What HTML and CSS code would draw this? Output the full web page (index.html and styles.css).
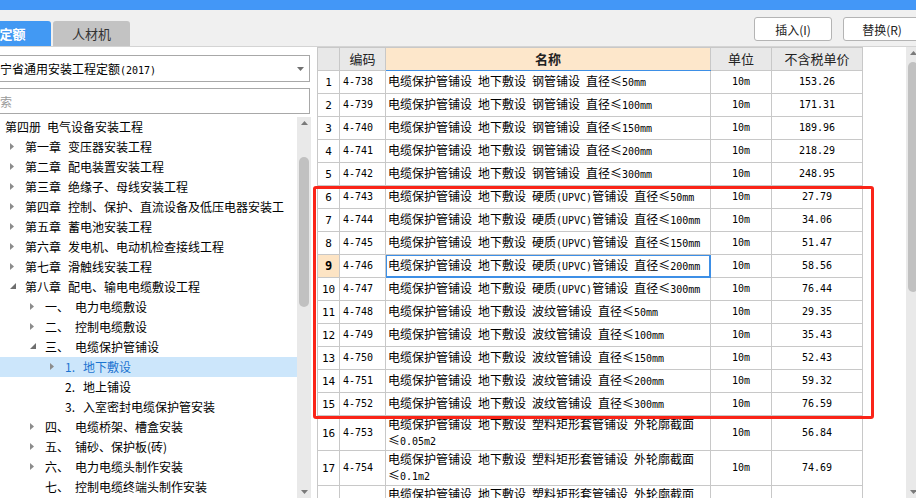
FILE: index.html
```html
<!DOCTYPE html>
<html lang="zh">
<head>
<meta charset="utf-8">
<link rel="stylesheet" href="styles.css">
</head>
<body>
<div class="topbar"></div>
<div class="toolbar">
  <div class="tab tab-active">定额</div>
  <div class="tab">人材机</div>
  <div class="btns">
    <button class="btn">插入(I)</button>
    <button class="btn">替换(R)</button>
  </div>
</div>
<div class="content">
  <div class="left">
    <div class="combo">
      <span>辽宁省通用安装工程定额<span class="m">(2017)</span></span>
      <svg class="caret" width="7" height="4" viewBox="0 0 7 4"><path d="M0 0H7L3.5 4Z" fill="#707070"/></svg>
    </div>
    <div class="search">搜索</div>
    <div class="tree">
      <div class="tree-list">
        <div class="row l0">第四册&ensp;电气设备安装工程</div>
        <div class="row l1"><span class="tw"><svg width="4" height="7" viewBox="0 0 4 7"><path d="M0 0L4 3.5L0 7Z" fill="#8c8c8c"/></svg></span><span>第一章</span><span class="nm1">变压器安装工程</span></div>
        <div class="row l1"><span class="tw"><svg width="4" height="7" viewBox="0 0 4 7"><path d="M0 0L4 3.5L0 7Z" fill="#8c8c8c"/></svg></span><span>第二章</span><span class="nm1">配电装置安装工程</span></div>
        <div class="row l1"><span class="tw"><svg width="4" height="7" viewBox="0 0 4 7"><path d="M0 0L4 3.5L0 7Z" fill="#8c8c8c"/></svg></span><span>第三章</span><span class="nm1">绝缘子、母线安装工程</span></div>
        <div class="row l1"><span class="tw"><svg width="4" height="7" viewBox="0 0 4 7"><path d="M0 0L4 3.5L0 7Z" fill="#8c8c8c"/></svg></span><span>第四章</span><span class="nm1">控制、保护、直流设备及低压电器安装工</span></div>
        <div class="row l1"><span class="tw"><svg width="4" height="7" viewBox="0 0 4 7"><path d="M0 0L4 3.5L0 7Z" fill="#8c8c8c"/></svg></span><span>第五章</span><span class="nm1">蓄电池安装工程</span></div>
        <div class="row l1"><span class="tw"><svg width="4" height="7" viewBox="0 0 4 7"><path d="M0 0L4 3.5L0 7Z" fill="#8c8c8c"/></svg></span><span>第六章</span><span class="nm1">发电机、电动机检查接线工程</span></div>
        <div class="row l1"><span class="tw"><svg width="4" height="7" viewBox="0 0 4 7"><path d="M0 0L4 3.5L0 7Z" fill="#8c8c8c"/></svg></span><span>第七章</span><span class="nm1">滑触线安装工程</span></div>
        <div class="row l1"><span class="tw"><svg width="6" height="6" viewBox="0 0 6 6"><path d="M6 0V6H0Z" fill="#6e6e6e"/></svg></span><span>第八章</span><span class="nm1">配电、输电电缆敷设工程</span></div>
        <div class="row l2"><span class="tw"><svg width="4" height="7" viewBox="0 0 4 7"><path d="M0 0L4 3.5L0 7Z" fill="#8c8c8c"/></svg></span><span class="lb2">一、</span><span>电力电缆敷设</span></div>
        <div class="row l2"><span class="tw"><svg width="4" height="7" viewBox="0 0 4 7"><path d="M0 0L4 3.5L0 7Z" fill="#8c8c8c"/></svg></span><span class="lb2">二、</span><span>控制电缆敷设</span></div>
        <div class="row l2"><span class="tw"><svg width="6" height="6" viewBox="0 0 6 6"><path d="M6 0V6H0Z" fill="#6e6e6e"/></svg></span><span class="lb2">三、</span><span>电缆保护管铺设</span></div>
        <div class="row l3 sel"><span class="tw"><svg width="4" height="7" viewBox="0 0 4 7"><path d="M0 0L4 3.5L0 7Z" fill="#8c8c8c"/></svg></span><span class="lb3">1.</span><span>地下敷设</span></div>
        <div class="row l3"><span class="tw"></span><span class="lb3">2.</span><span>地上铺设</span></div>
        <div class="row l3"><span class="tw"></span><span class="lb3">3.</span><span>入室密封电缆保护管安装</span></div>
        <div class="row l2"><span class="tw"><svg width="4" height="7" viewBox="0 0 4 7"><path d="M0 0L4 3.5L0 7Z" fill="#8c8c8c"/></svg></span><span class="lb2">四、</span><span>电缆桥架、槽盒安装</span></div>
        <div class="row l2"><span class="tw"><svg width="4" height="7" viewBox="0 0 4 7"><path d="M0 0L4 3.5L0 7Z" fill="#8c8c8c"/></svg></span><span class="lb2">五、</span><span>铺砂、保护板(砖)</span></div>
        <div class="row l2"><span class="tw"><svg width="4" height="7" viewBox="0 0 4 7"><path d="M0 0L4 3.5L0 7Z" fill="#8c8c8c"/></svg></span><span class="lb2">六、</span><span>电力电缆头制作安装</span></div>
        <div class="row l2"><span class="tw"></span><span class="lb2">七、</span><span>控制电缆终端头制作安装</span></div>
      </div>
      <div class="vscroll vs-left">
        <div class="arrow"><svg width="7" height="4" viewBox="0 0 7 4"><path d="M0 4H7L3.5 0Z" fill="#7a7a7a"/></svg></div>
        <div class="thumb thumb-left"></div>
        <div class="arrow arrow-bottom"><svg width="7" height="4" viewBox="0 0 7 4"><path d="M0 0H7L3.5 4Z" fill="#7a7a7a"/></svg></div>
      </div>
    </div>
  </div>
  <div class="right">
    <table class="grid">
      <colgroup><col class="c-n"><col class="c-code"><col class="c-name"><col class="c-unit"><col class="c-price"></colgroup>
      <thead>
        <tr><th></th><th>编码</th><th class="h-name">名称</th><th>单位</th><th>不含税单价</th></tr>
      </thead>
      <tbody>
        <tr><td class="n">1</td><td class="code">4-738</td><td>电缆保护管铺设&ensp;地下敷设&ensp;钢管铺设&ensp;直径≤<span class="m">50mm</span></td><td class="num">10m</td><td class="num">153.26</td></tr>
        <tr><td class="n">2</td><td class="code">4-739</td><td>电缆保护管铺设&ensp;地下敷设&ensp;钢管铺设&ensp;直径≤<span class="m">100mm</span></td><td class="num">10m</td><td class="num">171.31</td></tr>
        <tr><td class="n">3</td><td class="code">4-740</td><td>电缆保护管铺设&ensp;地下敷设&ensp;钢管铺设&ensp;直径≤<span class="m">150mm</span></td><td class="num">10m</td><td class="num">189.96</td></tr>
        <tr><td class="n">4</td><td class="code">4-741</td><td>电缆保护管铺设&ensp;地下敷设&ensp;钢管铺设&ensp;直径≤<span class="m">200mm</span></td><td class="num">10m</td><td class="num">218.29</td></tr>
        <tr><td class="n">5</td><td class="code">4-742</td><td>电缆保护管铺设&ensp;地下敷设&ensp;钢管铺设&ensp;直径≤<span class="m">300mm</span></td><td class="num">10m</td><td class="num">248.95</td></tr>
        <tr><td class="n">6</td><td class="code">4-743</td><td>电缆保护管铺设&ensp;地下敷设&ensp;硬质<span class="m">(UPVC)</span>管铺设&ensp;直径≤<span class="m">50mm</span></td><td class="num">10m</td><td class="num">27.79</td></tr>
        <tr><td class="n">7</td><td class="code">4-744</td><td>电缆保护管铺设&ensp;地下敷设&ensp;硬质<span class="m">(UPVC)</span>管铺设&ensp;直径≤<span class="m">100mm</span></td><td class="num">10m</td><td class="num">34.06</td></tr>
        <tr><td class="n">8</td><td class="code">4-745</td><td>电缆保护管铺设&ensp;地下敷设&ensp;硬质<span class="m">(UPVC)</span>管铺设&ensp;直径≤<span class="m">150mm</span></td><td class="num">10m</td><td class="num">51.47</td></tr>
        <tr class="cur"><td class="n">9</td><td class="code">4-746</td><td class="focus">电缆保护管铺设&ensp;地下敷设&ensp;硬质<span class="m">(UPVC)</span>管铺设&ensp;直径≤<span class="m">200mm</span></td><td class="num">10m</td><td class="num">58.56</td></tr>
        <tr><td class="n">10</td><td class="code">4-747</td><td>电缆保护管铺设&ensp;地下敷设&ensp;硬质<span class="m">(UPVC)</span>管铺设&ensp;直径≤<span class="m">300mm</span></td><td class="num">10m</td><td class="num">76.44</td></tr>
        <tr><td class="n">11</td><td class="code">4-748</td><td>电缆保护管铺设&ensp;地下敷设&ensp;波纹管铺设&ensp;直径≤<span class="m">50mm</span></td><td class="num">10m</td><td class="num">29.35</td></tr>
        <tr><td class="n">12</td><td class="code">4-749</td><td>电缆保护管铺设&ensp;地下敷设&ensp;波纹管铺设&ensp;直径≤<span class="m">100mm</span></td><td class="num">10m</td><td class="num">35.43</td></tr>
        <tr><td class="n">13</td><td class="code">4-750</td><td>电缆保护管铺设&ensp;地下敷设&ensp;波纹管铺设&ensp;直径≤<span class="m">150mm</span></td><td class="num">10m</td><td class="num">52.43</td></tr>
        <tr><td class="n">14</td><td class="code">4-751</td><td>电缆保护管铺设&ensp;地下敷设&ensp;波纹管铺设&ensp;直径≤<span class="m">200mm</span></td><td class="num">10m</td><td class="num">59.32</td></tr>
        <tr><td class="n">15</td><td class="code">4-752</td><td>电缆保护管铺设&ensp;地下敷设&ensp;波纹管铺设&ensp;直径≤<span class="m">300mm</span></td><td class="num">10m</td><td class="num">76.59</td></tr>
        <tr class="tall"><td class="n">16</td><td class="code">4-753</td><td class="wrap">电缆保护管铺设&ensp;地下敷设&ensp;塑料矩形套管铺设&ensp;外轮廓截面<br>≤<span class="m">0.05m2</span></td><td class="num">10m</td><td class="num">56.84</td></tr>
        <tr class="tall"><td class="n">17</td><td class="code">4-754</td><td class="wrap">电缆保护管铺设&ensp;地下敷设&ensp;塑料矩形套管铺设&ensp;外轮廓截面<br>≤<span class="m">0.1m2</span></td><td class="num">10m</td><td class="num">74.69</td></tr>
        <tr class="tall"><td class="n">18</td><td class="code">4-755</td><td class="wrap">电缆保护管铺设&ensp;地下敷设&ensp;塑料矩形套管铺设&ensp;外轮廓截面<br>≤<span class="m">0.2m2</span></td><td class="num">10m</td><td class="num">83.46</td></tr>
      </tbody>
    </table>
    <div class="vscroll vs-right">
      <div class="arrow"><svg width="7" height="4" viewBox="0 0 7 4"><path d="M0 4H7L3.5 0Z" fill="#7a7a7a"/></svg></div>
      <div class="thumb thumb-right"></div>
      <div class="arrow arrow-bottom"><svg width="7" height="4" viewBox="0 0 7 4"><path d="M0 0H7L3.5 4Z" fill="#7a7a7a"/></svg></div>
    </div>
  </div>
</div>
<div class="redbox"></div>
</body>
</html>
```

FILE: styles.css
```css
* { box-sizing: border-box; }

body {
  margin: 0;
  width: 916px;
  height: 498px;
  overflow: hidden;
  position: relative;
  background: #f0f0f0;
  font-family: "Noto Sans CJK SC", "Noto Sans", sans-serif;
  font-size: 12px;
  color: #000;
}

.m {
  font-family: "DejaVu Sans Mono", "Noto Sans CJK SC", monospace;
  font-size: 10px;
}

.topbar {
  height: 10px;
  background: #4397f7;
}

.toolbar {
  height: 37px;
  display: flex;
  align-items: flex-end;
  border-bottom: 1px solid #d4d4d4;
}

.tab {
  width: 77px;
  height: 25px;
  display: flex;
  align-items: center;
  justify-content: center;
  font-size: 13px;
  border-radius: 3px 3px 0 0;
  background: #c3c3c3;
  color: #333;
  margin-left: 2px;
}

.tab-active {
  margin-left: -26px;
  background: #4299f3;
  color: #fff;
  font-weight: bold;
}

.btns {
  margin-left: auto;
  margin-right: -5px;
  align-self: flex-start;
  margin-top: 7px;
  display: flex;
  gap: 11px;
}

.btn {
  width: 78px;
  height: 24px;
  padding: 0;
  background: #fff;
  border: 1px solid #b4b4b4;
  border-radius: 3px;
  font-family: "Noto Sans CJK SC", sans-serif;
  font-size: 12px;
  color: #222;
}

.content {
  display: flex;
  height: 451px;
}

.left {
  width: 311px;
  flex: none;
  background: #fff;
  padding-top: 8px;
  display: flex;
  flex-direction: column;
}

.combo {
  height: 27px;
  margin: 0 1px 0 -20px;
  border: 1px solid #a8a8a8;
  display: flex;
  align-items: center;
  padding-left: 7px;
  white-space: nowrap;
}

.caret {
  margin-left: auto;
  margin-right: 5px;
}

.search {
  height: 26px;
  margin: 6px 1px 0 -20px;
  border: 1px solid #a8a8a8;
  padding-left: 7px;
  color: #9a9a9a;
  display: flex;
  align-items: center;
}

.tree {
  flex: 1;
  min-height: 0;
  display: flex;
  margin-top: 3px;
}

.tree-list {
  flex: 1;
  overflow: hidden;
}

.row {
  height: 20px;
  display: flex;
  align-items: center;
  white-space: nowrap;
  padding-bottom: 2px;
}

.l0 { padding-left: 5px; }
.l1 { padding-left: 10px; }
.l2 { padding-left: 30px; }
.l3 { padding-left: 50px; }

.tw {
  width: 15px;
  flex: none;
  display: flex;
  align-items: center;
}

.nm1 { margin-left: 7px; }
.lb2 { width: 30px; flex: none; }
.lb3 { width: 18px; flex: none; }

.sel {
  background: #cce6fb;
  color: #1d74d0;
}

.vscroll {
  width: 14px;
  flex: none;
  background: #e9e9e9;
  display: flex;
  flex-direction: column;
  align-items: center;
}

.arrow {
  height: 12px;
  display: flex;
  align-items: center;
  justify-content: center;
  flex: none;
}

.arrow-bottom {
  margin-top: auto;
}

.thumb {
  width: 10px;
  border-radius: 5px;
  background: #c1c1c1;
  flex: none;
}

.thumb-left {
  margin-top: 28px;
  height: 150px;
}

.right {
  flex: 1;
  display: flex;
  background: #fff;
  padding-left: 6px;
  overflow: hidden;
}

.vs-right {
  margin-left: auto;
  margin-right: -4px;
}

.thumb-right {
  margin-top: 3px;
  height: 230px;
}

.grid {
  table-layout: fixed;
  border-collapse: collapse;
  width: 546px;
  align-self: flex-start;
}

.c-n { width: 22px; }
.c-code { width: 46px; }
.c-name { width: 325px; }
.c-unit { width: 61px; }
.c-price { width: 91px; }

.grid th,
.grid td {
  border: 1px solid #c8c8c8;
  padding: 1px 2px 2px;
  line-height: 15px;
  overflow: hidden;
  white-space: nowrap;
}

.grid tr { height: 23px; }
.grid tr.tall { height: 33px; }

.grid td.wrap {
  padding: 0 2px;
  line-height: 16px;
}

.grid th {
  background: #e8e8e8;
  font-weight: normal;
  font-size: 13px;
  color: #222;
}

.grid th.h-name {
  background: #fde7cb;
  font-weight: bold;
  border-bottom: 1px solid #3d8fe6;
}

.grid td.n {
  text-align: center;
  font-family: "DejaVu Sans Mono", monospace;
  font-size: 11px;
  padding: 0;
}

.grid td.code {
  font-family: "DejaVu Sans Mono", monospace;
  font-size: 10px;
  padding-left: 3px;
}

.grid td.num {
  text-align: center;
  font-family: "DejaVu Sans Mono", monospace;
  font-size: 10px;
}

.grid tr.cur td.n {
  background: #fde4c4;
  font-weight: bold;
  font-size: 12px;
}

.grid tr.cur td.code {
  border-left: 1px solid #3d8fe6;
}

.grid td.focus {
  border: 1px solid #3d8fe6;
  box-shadow: inset 0 0 0 1px #3d8fe6;
}

.redbox {
  position: absolute;
  left: 313px;
  top: 186px;
  width: 561px;
  height: 233px;
  border: 3px solid #fa2418;
  border-radius: 3px;
  pointer-events: none;
}
```
